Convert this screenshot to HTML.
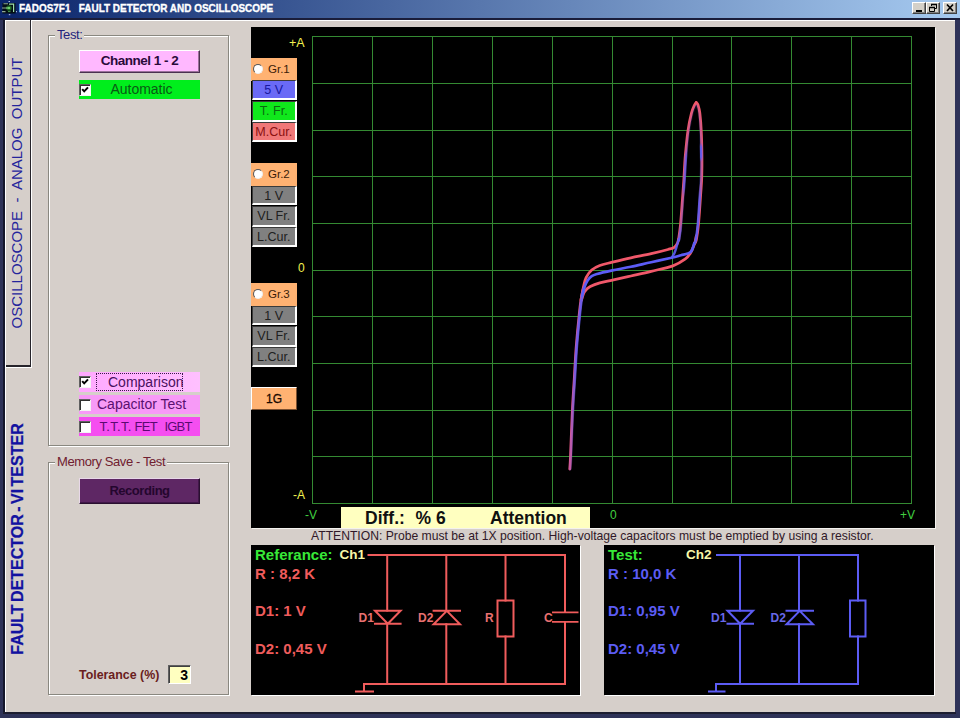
<!DOCTYPE html>
<html>
<head>
<meta charset="utf-8">
<title>FADOS7F1 FAULT DETECTOR AND OSCILLOSCOPE</title>
<style>
html,body{margin:0;padding:0;}
body{width:960px;height:720px;overflow:hidden;background:#fff;position:relative;font-family:"Liberation Sans",sans-serif;}
.abs{position:absolute;}
#win{left:0;top:0;width:960px;height:718px;background:#2e3258;overflow:hidden;}
#title{left:0;top:0;width:960px;height:18px;background:linear-gradient(to right,#0a246a 0%,#a6caf0 100%);}
#title .t{left:19px;top:1px;color:#fff;font-weight:bold;font-size:11px;line-height:15px;white-space:pre;transform:scaleX(0.905);transform-origin:0 0;-webkit-text-stroke:0.35px #fff;}
#darktop{left:0;top:18px;width:960px;height:2px;background:#1a1d3a;}
#client{left:4px;top:20px;width:951px;height:692px;background:#d6cfca;}
.cb{width:14px;height:12.4px;top:2px;background:#d4d0c8;box-sizing:border-box;border:1px solid;border-color:#fff #404040 #404040 #fff;box-shadow:inset -1px -1px 0 #808080;}
.grp{box-sizing:border-box;border:1px solid #8a8880;box-shadow:1px 1px 0 #fff, inset 1px 1px 0 #fff;}
.grp .lg{position:absolute;top:-9px;left:6px;background:#d6cfca;padding:0 2px;font-size:13px;letter-spacing:-0.4px;line-height:15px;white-space:pre;}
.btn{box-sizing:border-box;text-align:center;white-space:pre;}
.chk{box-sizing:border-box;width:12px;height:12px;background:#fff;border:1px solid;border-color:#606060 #f4f4f4 #f4f4f4 #606060;box-shadow:inset 1px 1px 0 #303030;}
.sk{box-sizing:border-box;border-style:solid;border-width:1px 2px 2px 1px;border-color:#3a3a3a #fff #fff #3a3a3a;font-size:12.5px;line-height:19.6px;text-align:center;white-space:pre;left:251.5px;width:45.5px;height:20.3px;}
.gr{left:251px;width:46px;height:22px;background:#ffb272;font-size:11.5px;line-height:22px;color:#3a1c08;white-space:pre;}
.gr i{position:absolute;left:2px;top:6px;width:10px;height:10px;border-radius:50%;background:#fff;box-sizing:border-box;border:1px solid #555;border-right-color:#eee;border-bottom-color:#eee;}
.gr span{position:absolute;left:17px;top:0;}
.ax{font-size:12px;line-height:12px;white-space:pre;}
.big{font-weight:bold;font-size:15px;line-height:16px;white-space:pre;}
</style>
</head>
<body>
<div id="win" class="abs">
  <div id="title" class="abs">
    <svg class="abs" style="left:0;top:0" width="18" height="18" viewBox="0 0 18 18">
      <rect x="2.5" y="3" width="13" height="10.5" fill="#020a06" fill-opacity="0.85"/>
      <circle cx="9" cy="8" r="2.8" fill="#1a5c1e"/>
      <path d="M3.5 3.8H8M2 8H8M2 11.6H5.5" stroke="#8fa894" stroke-width="1.1" fill="none"/>
      <path d="M6 8H9" stroke="#5cb860" stroke-width="1.2" fill="none"/>
      <circle cx="9" cy="8" r="1.3" fill="#6ad06a"/>
      <path d="M9 4.2H13.6V12" stroke="#9cdcaa" stroke-width="1.2" fill="none"/>
      <path d="M8 11.6H10.5" stroke="#4a9a50" stroke-width="1" fill="none"/>
      <rect x="8.5" y="1" width="1.5" height="1" fill="#a8b8d8"/><rect x="8.8" y="14.2" width="1.5" height="1" fill="#c8c8f0"/><rect x="16" y="11.2" width="1" height="1" fill="#d0d8f0"/>
    </svg>
    <div class="abs t">FADOS7F1   FAULT DETECTOR AND OSCILLOSCOPE</div>
    <div class="abs cb" style="left:912px"><div class="abs" style="left:2.5px;top:7px;width:6px;height:2px;background:#000"></div></div>
    <div class="abs cb" style="left:926px">
      <svg class="abs" style="left:1px;top:0" width="10" height="10" viewBox="0 0 10 10"><path d="M3.5 1.5H8.5V5.5H7M3.5 1.5V3M1.5 4.5H6.5V8.5H1.5Z" stroke="#000" stroke-width="1" fill="none"/><path d="M3 1.5H9M1 4.5H7" stroke="#000" stroke-width="1.6"/></svg>
    </div>
    <div class="abs cb" style="left:943px">
      <svg class="abs" style="left:1px;top:0" width="10" height="10" viewBox="0 0 10 10"><path d="M2 1.5L8 8M8 1.5L2 8" stroke="#000" stroke-width="1.7" fill="none"/></svg>
    </div>
  </div>
  <div id="darktop" class="abs"></div>
  <div id="client" class="abs"></div>
  <div class="abs" style="left:3px;top:712px;width:953px;height:2px;background:#1c1d30"></div>
  <!-- left edge lines and tabs -->
  <div class="abs" style="left:3px;top:20px;width:2px;height:692px;background:#15172c"></div>
  <div class="abs" style="left:5px;top:20px;width:1px;height:692px;background:#fff"></div>
  <div class="abs" style="left:5px;top:20px;width:950px;height:1px;background:#fff"></div>
  <div class="abs" style="left:29.5px;top:20px;width:1.5px;height:347px;background:#26242a"></div>
  <div class="abs" style="left:6px;top:365.4px;width:25px;height:1.6px;background:#26242a"></div>
  <div class="abs" style="left:31px;top:21px;width:1px;height:347px;background:#fff"></div>
  <div class="abs" style="left:6px;top:367px;width:26px;height:1px;background:#fff"></div>
  <div class="abs" style="left:17px;top:193px;width:0;height:0;"><div class="abs" id="vt1" style="transform:translate(-50%,-50%) rotate(-90deg);white-space:pre;font-size:15px;line-height:16px;color:#24249c;word-spacing:0px;">OSCILLOSCOPE  -  ANALOG  OUTPUT</div></div>
  <div class="abs" style="left:18.3px;top:539px;width:0;height:0;"><div class="abs" id="vt2" style="transform:translate(-50%,-50%) rotate(-90deg);white-space:pre;font-size:16px;font-weight:bold;line-height:16px;color:#1212a0;word-spacing:-2px;-webkit-text-stroke:0.25px #1212a0;">FAULT DETECTOR - VI TESTER</div></div>

  <!-- Test group -->
  <div class="abs grp" style="left:48px;top:35px;width:181px;height:411px;"><div class="lg" style="color:#24247c">Test:</div></div>
  <div class="abs btn" style="left:79px;top:50px;width:121px;height:23px;background:#ffb8ff;border:1px solid;border-color:#fff #4a3050 #4a3050 #fff;box-shadow:inset -1px -1px 0 #9a709a;font-weight:bold;font-size:13.5px;letter-spacing:-0.5px;line-height:20px;color:#2a0a3a;">Channel 1 - 2</div>
  <div class="abs btn" style="left:79px;top:80px;width:121px;height:19px;background:#00ee1c;font-size:14px;line-height:18px;color:#0a5a14;padding-left:4px">Automatic</div>
  <div class="abs chk" style="left:79px;top:83.5px"><svg width="10" height="10" viewBox="0 0 10 10" style="position:absolute;left:0;top:0"><path d="M2.2 4.2L4.2 6.4L8 2.4" stroke="#000" stroke-width="2" fill="none"/></svg></div>

  <div class="abs" style="left:79px;top:372px;width:121px;height:20px;background:linear-gradient(to right,#ffa8ff,#ffc0ff)"></div>
  <div class="abs" style="left:96px;top:373px;width:87px;height:18px;box-sizing:border-box;border:1px dotted #3a1a4a;font-size:14px;line-height:16px;color:#4a1060;padding-left:11px;white-space:pre">Comparison</div>
  <div class="abs chk" style="left:79px;top:375.5px"><svg width="10" height="10" viewBox="0 0 10 10" style="position:absolute;left:0;top:0"><path d="M2.2 4.2L4.2 6.4L8 2.4" stroke="#000" stroke-width="2" fill="none"/></svg></div>
  <div class="abs" style="left:79px;top:395px;width:121px;height:19px;background:#f79af7;font-size:14px;line-height:18px;color:#5a1070;padding-left:18px;box-sizing:border-box;white-space:pre">Capacitor Test</div>
  <div class="abs chk" style="left:79px;top:398.5px"></div>
  <div class="abs" style="left:79px;top:417px;width:121px;height:19px;background:#f54ef0;font-size:13px;line-height:19px;color:#5a0a70;box-sizing:border-box;white-space:pre"><span class="abs" style="left:20.4px;letter-spacing:0.35px">T.T.T.</span><span class="abs" style="left:55.6px;letter-spacing:-0.7px">FET</span><span class="abs" style="left:85.5px;letter-spacing:-0.8px">IGBT</span></div>
  <div class="abs chk" style="left:79px;top:420.5px"></div>

  <!-- Memory group -->
  <div class="abs grp" style="left:48px;top:462px;width:181px;height:233px;"><div class="lg" style="color:#702030">Memory Save - Test</div></div>
  <div class="abs btn" style="left:79px;top:478px;width:121px;height:26px;background:#5e2764;border:1px solid;border-color:#e8d8e8 #2a1030 #2a1030 #e8d8e8;box-shadow:inset -1px -1px 0 #401848;font-weight:bold;font-size:13px;letter-spacing:-0.45px;line-height:23px;color:#24062e;">Recording</div>
  <div class="abs" style="left:79px;top:668px;font-weight:bold;font-size:12.4px;line-height:14px;color:#6a2020;white-space:pre">Tolerance (%)</div>
  <div class="abs" style="left:168px;top:665px;width:23px;height:19px;box-sizing:border-box;background:#ffffc0;border:1px solid;border-color:#606060 #fff #fff #606060;box-shadow:inset 1px 1px 0 #404040;font-weight:bold;font-size:14px;line-height:18px;text-align:right;padding-right:2px;">3</div>

  <!-- scope -->
  <div class="abs" style="left:251px;top:27px;width:684px;height:500.5px;background:#000;box-shadow:1px 1px 0 #f4f2ee"></div>
  <svg class="abs" style="left:0;top:0" width="960" height="720" viewBox="0 0 960 720">
    <g stroke="#348a32" stroke-width="1" fill="none" shape-rendering="crispEdges"><line x1="312.5" y1="36.0" x2="312.5" y2="504.0"/><line x1="372.5" y1="36.0" x2="372.5" y2="504.0"/><line x1="432.5" y1="36.0" x2="432.5" y2="504.0"/><line x1="492.5" y1="36.0" x2="492.5" y2="504.0"/><line x1="552.5" y1="36.0" x2="552.5" y2="504.0"/><line x1="612.5" y1="36.0" x2="612.5" y2="504.0"/><line x1="672.5" y1="36.0" x2="672.5" y2="504.0"/><line x1="731.5" y1="36.0" x2="731.5" y2="504.0"/><line x1="791.5" y1="36.0" x2="791.5" y2="504.0"/><line x1="851.5" y1="36.0" x2="851.5" y2="504.0"/><line x1="911.5" y1="36.0" x2="911.5" y2="504.0"/><line x1="312.0" y1="36.5" x2="912.0" y2="36.5"/><line x1="312.0" y1="83.5" x2="912.0" y2="83.5"/><line x1="312.0" y1="130.5" x2="912.0" y2="130.5"/><line x1="312.0" y1="176.5" x2="912.0" y2="176.5"/><line x1="312.0" y1="223.5" x2="912.0" y2="223.5"/><line x1="312.0" y1="270.5" x2="912.0" y2="270.5"/><line x1="312.0" y1="316.5" x2="912.0" y2="316.5"/><line x1="312.0" y1="363.5" x2="912.0" y2="363.5"/><line x1="312.0" y1="410.5" x2="912.0" y2="410.5"/><line x1="312.0" y1="456.5" x2="912.0" y2="456.5"/><line x1="312.0" y1="503.5" x2="912.0" y2="503.5"/></g>
    <g id="curves" fill="none" stroke-linecap="round" stroke-linejoin="round">
    <!--CURVES-->
<defs><linearGradient id="gr" gradientUnits="userSpaceOnUse" x1="0" y1="100" x2="0" y2="256"><stop offset="0.000" stop-color="rgb(92,92,246)" stop-opacity="0.10"/><stop offset="0.276" stop-color="rgb(92,92,246)" stop-opacity="0.30"/><stop offset="0.301" stop-color="rgb(92,92,246)" stop-opacity="0.90"/><stop offset="0.365" stop-color="rgb(92,92,246)" stop-opacity="0.90"/><stop offset="0.397" stop-color="rgb(92,92,246)" stop-opacity="0.35"/><stop offset="0.538" stop-color="rgb(92,92,246)" stop-opacity="0.40"/><stop offset="0.628" stop-color="rgb(92,92,246)" stop-opacity="0.85"/><stop offset="1.000" stop-color="rgb(92,92,246)" stop-opacity="0.95"/></linearGradient><linearGradient id="gl" gradientUnits="userSpaceOnUse" x1="0" y1="100" x2="0" y2="256"><stop offset="0.000" stop-color="rgb(92,92,246)" stop-opacity="0.10"/><stop offset="0.308" stop-color="rgb(92,92,246)" stop-opacity="0.30"/><stop offset="0.365" stop-color="rgb(92,92,246)" stop-opacity="0.75"/><stop offset="0.564" stop-color="rgb(92,92,246)" stop-opacity="0.75"/><stop offset="0.615" stop-color="rgb(92,92,246)" stop-opacity="0.30"/><stop offset="0.795" stop-color="rgb(92,92,246)" stop-opacity="0.35"/><stop offset="0.840" stop-color="rgb(92,92,246)" stop-opacity="0.70"/><stop offset="0.904" stop-color="rgb(92,92,246)" stop-opacity="0.70"/><stop offset="1.000" stop-color="rgb(92,92,246)" stop-opacity="0.90"/></linearGradient><linearGradient id="gt" gradientUnits="userSpaceOnUse" x1="0" y1="285" x2="0" y2="470"><stop offset="0.000" stop-color="rgb(92,92,246)" stop-opacity="0.85"/><stop offset="0.459" stop-color="rgb(92,92,246)" stop-opacity="0.80"/><stop offset="0.595" stop-color="rgb(92,92,246)" stop-opacity="0.60"/><stop offset="0.784" stop-color="rgb(92,92,246)" stop-opacity="0.40"/><stop offset="1.000" stop-color="rgb(92,92,246)" stop-opacity="0.25"/></linearGradient></defs>
<path d="M569.8 469.0C569.9 467.0 570.1 466.8 570.5 457.0C570.9 447.2 571.8 423.8 572.4 410.5C573.0 397.2 573.8 387.8 574.4 377.0C575.0 366.2 575.5 356.0 576.3 346.0C577.1 336.0 578.2 324.7 579.0 317.0C579.8 309.3 580.2 304.8 581.0 300.0C581.8 295.2 583.1 290.0 583.5 288.0" stroke="#ea5a86" stroke-width="2.8"/>
<path d="M581.0 300.0C581.4 297.8 582.6 290.7 583.5 286.9C584.4 283.1 584.8 280.2 586.2 277.4C587.6 274.6 589.4 272.0 591.7 270.0C594.0 268.0 596.3 266.8 599.8 265.5C603.2 264.2 607.2 263.5 612.4 262.2C617.6 260.9 624.4 259.2 630.9 257.8C637.4 256.4 645.0 255.1 651.2 253.7C657.4 252.3 664.1 250.6 668.0 249.5C671.9 248.4 672.8 248.3 674.3 247.3C675.8 246.3 676.5 244.9 677.3 243.5C678.0 242.1 678.5 239.8 678.8 239.0" stroke="#f0586a" stroke-width="2.8"/>
<path d="M581.5 300.0C581.9 298.8 583.0 294.8 583.8 293.0C584.6 291.2 585.4 290.5 586.5 289.4C587.6 288.3 588.1 287.5 590.3 286.4C592.5 285.3 596.1 283.9 599.8 282.8C603.5 281.8 607.2 281.2 612.4 280.1C617.6 279.0 624.4 277.5 630.9 276.0C637.4 274.5 644.2 273.0 651.2 271.3C658.2 269.6 667.2 267.9 672.9 265.9C678.5 263.9 682.2 261.2 685.1 259.1C688.0 257.0 688.9 255.6 690.5 253.0C692.1 250.4 693.6 246.3 694.6 243.5C695.6 240.7 696.0 237.2 696.3 236.0" stroke="#f0586a" stroke-width="2.8"/>
<path d="M678.5 240.0C678.9 237.3 679.9 231.2 680.6 223.8C681.3 216.2 682.2 202.7 682.8 195.0C683.3 187.3 683.6 184.2 684.0 177.5C684.4 170.8 684.7 162.8 685.4 155.0C686.1 147.2 687.0 137.6 688.0 130.6C689.0 123.6 690.4 117.3 691.5 113.0C692.6 108.7 693.7 106.8 694.5 105.0C695.3 103.2 696.0 102.9 696.2 102.5" stroke="#f0586a" stroke-width="2.8"/>
<path d="M696.2 102.5C696.5 102.9 697.4 103.2 698.0 105.0C698.6 106.8 699.3 108.7 699.8 113.0C700.3 117.3 700.9 123.6 701.2 130.6C701.6 137.6 701.8 147.2 701.9 155.0C702.0 162.8 701.9 170.8 701.7 177.5C701.5 184.2 701.1 187.3 700.6 195.0C700.1 202.7 699.2 216.2 698.5 223.8C697.8 231.2 696.9 236.7 696.3 240.0C695.6 243.3 694.9 242.9 694.6 243.5" stroke="#f0586a" stroke-width="2.8"/>
<path d="M582.0 296.0C582.4 294.5 583.6 289.6 584.5 287.0C585.4 284.4 586.4 282.3 587.6 280.5C588.8 278.7 590.1 277.3 591.7 276.2C593.3 275.1 593.7 275.0 597.1 274.0C600.5 273.0 606.8 271.6 612.4 270.4C618.0 269.2 624.4 268.2 630.9 266.8C637.4 265.4 644.4 263.7 651.2 262.2C658.0 260.7 666.6 258.9 671.6 257.8C676.6 256.7 678.3 256.0 681.0 255.3C683.7 254.6 686.0 254.2 687.8 253.5C689.5 252.8 690.4 252.7 691.5 251.0C692.6 249.3 693.8 244.8 694.2 243.5" stroke="#5c5cf6" stroke-width="2.7"/>
<path d="M671.6 257.8C672.1 257.0 673.6 255.0 674.5 253.0C675.4 251.0 676.1 248.3 676.8 246.0C677.5 243.7 678.5 240.2 678.8 239.0" stroke="#5c5cf6" stroke-width="2.4" stroke-opacity="0.9"/>
<path d="M679.0 240.0C679.4 237.3 680.5 231.2 681.2 223.8C681.9 216.2 682.8 202.7 683.4 195.0C684.0 187.3 684.2 184.2 684.7 177.5C685.2 170.8 685.4 162.8 686.1 155.0C686.8 147.2 687.8 137.4 688.8 130.6C689.8 123.8 691.2 117.8 692.2 114.0C693.2 110.2 694.1 108.9 694.8 107.5C695.5 106.1 696.0 105.8 696.2 105.5" stroke="url(#gl)" stroke-width="2.6"/>
<path d="M696.2 105.5C696.5 105.8 697.1 106.1 697.6 107.5C698.1 108.9 698.7 110.2 699.2 114.0C699.7 117.8 700.3 123.8 700.6 130.6C700.9 137.4 701.1 147.2 701.2 155.0C701.3 162.8 701.2 170.8 701.0 177.5C700.8 184.2 700.4 187.3 699.9 195.0C699.4 202.7 698.6 216.2 697.9 223.8C697.2 231.2 696.4 236.7 695.8 240.0C695.2 243.3 694.5 242.9 694.2 243.5" stroke="url(#gr)" stroke-width="2.6"/>
<path d="M570.3 469.0C570.4 467.0 570.6 466.8 571.0 457.0C571.4 447.2 572.2 423.8 572.9 410.5C573.5 397.2 574.2 387.8 574.9 377.0C575.5 366.2 576.0 356.0 576.8 346.0C577.6 336.0 578.7 324.7 579.5 317.0C580.3 309.3 580.8 304.8 581.5 300.0C582.2 295.2 583.6 290.0 584.0 288.0" stroke="url(#gt)" stroke-width="2.8"/>
<!--/CURVES-->
    </g>
  </svg>
  <div class="abs ax" style="left:289px;top:37px;color:#f0f050;font-size:12.5px">+A</div>
  <div class="abs ax" style="left:298px;top:262px;color:#f0f050">0</div>
  <div class="abs ax" style="left:293px;top:489px;color:#f0f050">-A</div>
  <div class="abs ax" style="left:305px;top:509px;color:#40d040">-V</div>
  <div class="abs ax" style="left:610px;top:509px;color:#40d040">0</div>
  <div class="abs ax" style="left:900px;top:509px;color:#40d040">+V</div>

  <div class="abs gr" style="top:57.5px;height:23px"><i></i><span>Gr.1</span></div>
  <div class="abs sk" style="top:80.3px;height:20.2px;background:#6a6af6;color:#1818a0">5 V</div>
  <div class="abs sk" style="top:100.5px;height:21.1px;background:#10e81c;color:#0a6a10">T. Fr.</div>
  <div class="abs sk" style="top:121.6px;height:20.3px;background:#f07878;color:#8a1010">M.Cur.</div>

  <div class="abs gr" style="top:162.5px;height:23.5px"><i></i><span>Gr.2</span></div>
  <div class="abs sk" style="top:185.7px;height:19.8px;background:#808080;color:#202020">1 V</div>
  <div class="abs sk" style="top:205.5px;height:21.1px;background:#808080;color:#202020">VL Fr.</div>
  <div class="abs sk" style="top:226.6px;height:20.3px;background:#808080;color:#202020">L.Cur.</div>

  <div class="abs gr" style="top:282.5px;height:23.5px"><i></i><span>Gr.3</span></div>
  <div class="abs sk" style="top:305.7px;height:19.8px;background:#808080;color:#202020">1 V</div>
  <div class="abs sk" style="top:325.5px;height:21.1px;background:#808080;color:#202020">VL Fr.</div>
  <div class="abs sk" style="top:346.6px;height:20.3px;background:#808080;color:#202020">L.Cur.</div>

  <div class="abs btn" style="left:251px;top:387px;width:46px;height:23px;background:#ffb272;box-sizing:border-box;border:1px solid;border-color:#fff #7a5030 #7a5030 #fff;font-size:12px;line-height:22px;color:#1a0a00;-webkit-text-stroke:0.3px #1a0a00">1G</div>

  <div class="abs" style="left:341px;top:507px;width:249px;height:21px;background:#ffffc0;font-weight:bold;font-size:17.5px;line-height:21px;color:#101010;white-space:pre;overflow:hidden"><span class="abs" style="left:24px;top:1px">Diff.:</span><span class="abs" style="left:74.5px;top:1px">% 6</span><span class="abs" style="left:149px;top:1px">Attention</span></div>
  <div class="abs" style="left:311px;top:529px;font-size:12.16px;line-height:15px;color:#301828;white-space:pre">ATTENTION: Probe must be at 1X position. High-voltage capacitors must be emptied by using a resistor.</div>

  <!-- bottom panels -->
  <div class="abs" style="left:251px;top:545px;width:329px;height:150px;background:#000;box-shadow:1px 1px 0 #fff"></div>
  <div class="abs" style="left:604px;top:545px;width:330px;height:150px;background:#000;box-shadow:1px 1px 0 #fff"></div>
  <div class="abs big" style="left:255px;top:547px;color:#38e838">Referance:</div>
  <div class="abs big" style="left:339.5px;top:547px;color:#f8f8a8;font-size:13.5px">Ch1</div>
  <div class="abs big" style="left:255px;top:566px;color:#f05c5c">R : 8,2 K</div>
  <div class="abs big" style="left:255px;top:603px;color:#f05c5c">D1: 1 V</div>
  <div class="abs big" style="left:255px;top:641px;color:#f05c5c">D2: 0,45 V</div>
  <div class="abs big" style="left:608px;top:547px;color:#38e838">Test:</div>
  <div class="abs big" style="left:686px;top:547px;color:#f8f8a8;font-size:13.5px">Ch2</div>
  <div class="abs big" style="left:608px;top:566px;color:#5c5cf4">R : 10,0 K</div>
  <div class="abs big" style="left:608px;top:603px;color:#5c5cf4">D1: 0,95 V</div>
  <div class="abs big" style="left:608px;top:641px;color:#5c5cf4">D2: 0,45 V</div>
  <svg class="abs" style="left:0;top:540px" width="960" height="160" viewBox="0 540 960 160">
    <g stroke="#f05c5c" stroke-width="2" fill="none" stroke-linecap="square">
      <path d="M368.5 555H565V684H364V691M356 691.5H373"/>
      <path d="M387.2 555V610.6M387.2 623.8V684M446.3 555V610.6M446.3 624.2V684M505.5 555V600.5M505.5 636.5V684"/>
      <path d="M375 610.7H400.6L387.8 623.7ZM375 623.8H400.6"/>
      <path d="M433.6 624.2H460L446.8 610.8ZM433.6 610.7H460"/>
      <rect x="497.5" y="600.5" width="16" height="36"/>
    </g>
    <g fill="#000"><rect x="551" y="613" width="28" height="8.5"/></g>
    <g stroke="#f05c5c" stroke-width="1.8" fill="none"><path d="M552 612.3H578.5M552 621.8H578.5"/></g>
    <g stroke="#5c5cf4" stroke-width="2" fill="none" stroke-linecap="square">
      <path d="M717 555H858V600.5M858 636.5V684H716V691M709 691.5H724.5"/>
      <path d="M740 555V610.6M740 623.8V684M799 555V610.6M799 624.2V684"/>
      <path d="M727.5 610.7H753L740.2 623.7ZM727.5 623.8H753"/>
      <path d="M786.5 624.2H813L799.7 610.8ZM786.5 610.7H813"/>
      <rect x="850" y="600.5" width="15.5" height="36"/>
    </g>
    <g font-family="Liberation Sans, sans-serif" font-weight="bold" font-size="12">
      <g fill="#e87070"><text x="358.5" y="622">D1</text><text x="418" y="622">D2</text><text x="485" y="622">R</text><text x="544" y="622">C</text></g>
      <g fill="#6868e8"><text x="711" y="622">D1</text><text x="770.5" y="622">D2</text></g>
    </g>
  </svg>

</div>
</body>
</html>
